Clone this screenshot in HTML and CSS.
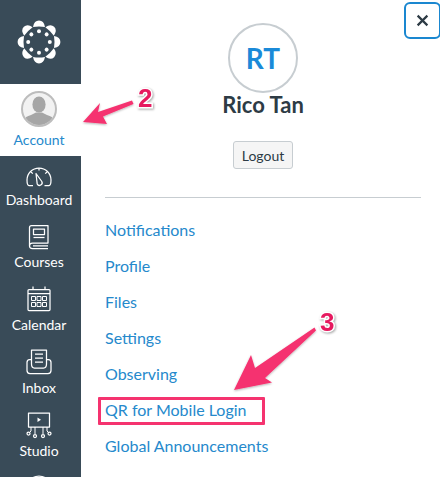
FILE: index.html
```html
<!DOCTYPE html>
<html lang="en">
<head>
<meta charset="utf-8">
<title>Account</title>
<link rel="stylesheet" href="styles.css">
</head>
<body>
<div class="page">
  <nav class="sidebar">
    <div class="brand">
      <svg class="logo" viewBox="-24 -24 48 48" width="48" height="48">
        <g fill="#fff">
          <g id="seg"><path d="M-6,-15 Q-4.8,-21.4 0,-21.4 Q4.8,-21.4 6,-15 Q0,-16 -6,-15Z"/><circle cx="0" cy="-10.8" r="2"/></g>
          <use href="#seg" transform="rotate(45)"/>
          <use href="#seg" transform="rotate(90)"/>
          <use href="#seg" transform="rotate(135)"/>
          <use href="#seg" transform="rotate(180)"/>
          <use href="#seg" transform="rotate(225)"/>
          <use href="#seg" transform="rotate(270)"/>
          <use href="#seg" transform="rotate(315)"/>
        </g>
      </svg>
    </div>
    <a class="account">
      <svg class="avatar-small" viewBox="0 0 36 36" width="36" height="36">
        <defs><clipPath id="round"><circle cx="18" cy="18" r="16"/></clipPath></defs>
        <circle cx="18" cy="18" r="17" fill="#f2f2f2" stroke="#bdbdbd" stroke-width="2"/>
        <g clip-path="url(#round)" fill="#a6a6a6">
          <ellipse cx="18" cy="13.5" rx="6.6" ry="8"/>
          <path d="M3,35 V29 Q4,25.5 10,24 L15,21.5 H21 L26,24 Q32,25.5 33,29 V35Z"/>
        </g>
      </svg>
      <span class="account-label">Account</span>
    </a>
    <a class="nav-item nav-item-first">
      <svg class="nav-icon" viewBox="0 0 26 26">
        <path d="M7,24.5 H3 Q1,24.5 1,19 A12,12 0 0 1 25,19 Q25,24.5 23,24.5 H18.5"/>
        <path d="M13,7 V9.5 M5,11 L6.8,12.6 M21,11 L19.2,12.6"/>
        <path d="M10,12.5 L15.8,20.5 A2.6,2.6 0 0 1 11.2,23 Z"/>
      </svg>
      <span class="nav-label">Dashboard</span>
    </a>
    <a class="nav-item">
      <svg class="nav-icon" viewBox="0 -1 26 26">
        <path d="M3.5,22 V3.5 Q3.5,1.5 5.5,1.5 H22 V19 H6.5 Q3.5,19 3.5,22 Q3.5,24.5 6.5,24.5 H22 M22,21.8 H7"/>
        <rect x="7.5" y="5" width="11" height="5.5"/>
        <path d="M7.5,13.5 H18.5"/>
      </svg>
      <span class="nav-label">Courses</span>
    </a>
    <a class="nav-item">
      <svg class="nav-icon" viewBox="0 0 26 26">
        <rect x="2" y="3.5" width="22" height="21" rx="1"/>
        <path d="M7,0.5 V3.5 M19,0.5 V3.5 M2,7.5 H24"/>
        <path class="thin" d="M5.5,10.5 h4 v4 h-4z M11,10.5 h4 v4 h-4z M16.5,10.5 h4 v4 h-4z M5.5,16.5 h4 v4 h-4z M11,16.5 h4 v4 h-4z M16.5,16.5 h4 v4 h-4z"/>
      </svg>
      <span class="nav-label">Calendar</span>
    </a>
    <a class="nav-item">
      <svg class="nav-icon" viewBox="0 0 26 26">
        <path d="M5.5,15 V1 H20.5 V15"/>
        <path d="M9,5 H17 M9,9 H17 M9,13 H17"/>
        <path d="M5.5,10.5 H3.5 Q1,10.5 1,13.5 V21.5 Q1,24.5 4,24.5 H22 Q25,24.5 25,21.5 V13.5 Q25,10.5 22.5,10.5 H20.5"/>
        <path d="M5.5,15 Q5.5,19 8.5,19 H17.5 Q20.5,19 20.5,15"/>
      </svg>
      <span class="nav-label">Inbox</span>
    </a>
    <a class="nav-item">
      <svg class="nav-icon" viewBox="0 0 26 26">
        <rect x="2.5" y="1" width="21" height="14"/>
        <path class="solid" d="M11.5,5.5 L15,7.8 L11.5,10Z"/>
        <path class="thin" d="M5,15 V19 L3.5,20.5 M9,15 V22 M17,15 V22 M21,15 V19 L22.5,20.5"/>
        <circle cx="2.5" cy="21.5" r="1.5"/>
        <circle cx="9" cy="24" r="1.5"/>
        <circle cx="17" cy="24" r="1.5"/>
        <circle cx="23.5" cy="21.5" r="1.5"/>
      </svg>
      <span class="nav-label">Studio</span>
    </a>
    <a class="nav-item">
      <svg class="nav-icon" viewBox="0 0 26 26"><circle cx="13" cy="13" r="12"/></svg>
    </a>
  </nav>

  <main class="panel">
    <section class="profile">
      <div class="avatar">RT</div>
      <h1 class="name">Rico Tan</h1>
      <button class="logout" type="button">Logout</button>
    </section>
    <hr class="divider">
    <ul class="links">
      <li><a>Notifications</a></li>
      <li><a>Profile</a></li>
      <li><a>Files</a></li>
      <li><a>Settings</a></li>
      <li><a>Observing</a></li>
      <li><a>QR for Mobile Login</a></li>
      <li><a>Global Announcements</a></li>
    </ul>
  </main>

  <button class="close" type="button" aria-label="Close">
    <svg viewBox="0 0 12 12" width="13" height="13"><path d="M1.5,1.5 L10.5,10.5 M10.5,1.5 L1.5,10.5"/></svg>
  </button>

  <svg class="arrows" viewBox="0 0 440 477" width="440" height="477">
    <defs>
      <filter id="soft" x="-20%" y="-20%" width="140%" height="140%">
        <feDropShadow dx="0" dy="1" stdDeviation="0.8" flood-color="#000" flood-opacity="0.3"/>
      </filter>
    </defs>
    <g filter="url(#soft)">
      <path class="arrow" d="M132,100.5 L98,112 L100,103 L83,122 L107,124 L103,116.5 L133.5,104 Z"/>
      <path class="arrow" d="M314.5,327.5 L255,368 L251,355 L234,390 L272,382.5 L265,378 L316,330.5 Z"/>
    </g>
  </svg>
  <span class="step step-two">2</span>
  <span class="step step-three">3</span>
  <div class="highlight"></div>
</div>
</body>
</html>
```

FILE: styles.css
```css
* {
  box-sizing: border-box;
}

html,
body {
  margin: 0;
  height: 100%;
  overflow: hidden;
  background: #fff;
}

body {
  font-family: Lato, "Open Sans", sans-serif;
  color: #2d3b45;
}

.page {
  position: relative;
  display: flex;
  width: 440px;
  height: 477px;
  overflow: hidden;
}

.sidebar {
  flex: 0 0 81px;
  height: 477px;
  overflow: hidden;
  background: #394b58;
  display: flex;
  flex-direction: column;
}

.brand {
  flex: 0 0 84px;
  padding: 18px 0 0 15px;
}

.logo {
  display: block;
}

.account {
  flex: 0 0 72px;
  background: #fff;
  display: flex;
  flex-direction: column;
  align-items: center;
  padding: 7px 3px 0 0;
}

.avatar-small {
  display: block;
  margin-bottom: 4px;
}

.account-label {
  font-size: 14px;
  line-height: 18px;
  color: #2589cc;
}

.nav-item {
  flex: 0 0 63px;
  display: flex;
  flex-direction: column;
  align-items: center;
  padding: 5px 3px 0 0;
}

.nav-item-first {
  flex-basis: 62px;
}

.nav-icon {
  display: block;
  width: 26px;
  height: 26px;
  flex: none;
  margin-bottom: 4px;
  fill: none;
  stroke: #fff;
  stroke-width: 1.25;
  stroke-linejoin: round;
  overflow: visible;
}

.nav-icon .thin {
  stroke-width: 1;
}

.nav-icon .solid {
  fill: #fff;
  stroke: none;
}

.nav-label {
  font-size: 14px;
  line-height: 18px;
  color: #fff;
  white-space: nowrap;
}

.panel {
  flex: 0 0 316px;
  margin-left: 24px;
}

.profile {
  display: flex;
  flex-direction: column;
  align-items: center;
  padding-top: 23px;
}

.avatar {
  width: 70px;
  height: 70px;
  border: 2px solid #c7cdd1;
  border-radius: 50%;
  display: flex;
  align-items: center;
  justify-content: center;
  font-size: 28px;
  font-weight: 700;
  color: #1a8ad8;
}

.name {
  margin: 0;
  font-size: 22px;
  line-height: 24px;
  font-weight: 700;
  color: #2d3b45;
}

.logout {
  margin-top: 24px;
  width: 60px;
  height: 28px;
  padding: 0;
  font-family: inherit;
  font-size: 14px;
  color: #2d3b45;
  background: #f5f5f5;
  border: 1px solid #c7cdd1;
  border-radius: 3px;
}

.divider {
  margin: 28px 0 0;
  border: 0;
  border-top: 1px solid #c7cdd1;
}

.links {
  list-style: none;
  margin: 13px 0 0;
  padding: 0;
}

.links li {
  height: 36px;
  display: flex;
  align-items: center;
}

.links a {
  font-size: 16px;
  color: #2589cc;
}

.close {
  position: absolute;
  top: 2px;
  left: 404px;
  width: 37px;
  height: 37px;
  padding: 0;
  display: flex;
  align-items: center;
  justify-content: center;
  background: #fff;
  border: 2px solid #1a87d0;
  border-radius: 6px;
}

.close path {
  fill: none;
  stroke: #2d3b45;
  stroke-width: 2;
}

.arrows {
  position: absolute;
  top: 0;
  left: 0;
  pointer-events: none;
}

.arrow {
  fill: #f5336f;
}

.step {
  position: absolute;
  font-family: "Liberation Sans", sans-serif;
  font-size: 26px;
  line-height: 26px;
  font-weight: 700;
  color: #e6195f;
  -webkit-text-stroke: 3px #fff;
  paint-order: stroke fill;
  filter: drop-shadow(1px 1px 1px rgba(0, 0, 0, 0.35));
}

.step-two {
  top: 85px;
  left: 138px;
}

.step-three {
  top: 309px;
  left: 320px;
}

.highlight {
  position: absolute;
  top: 397px;
  left: 98px;
  width: 167px;
  height: 28px;
  border: 3px solid #f5336f;
  border-radius: 1px;
}
```
